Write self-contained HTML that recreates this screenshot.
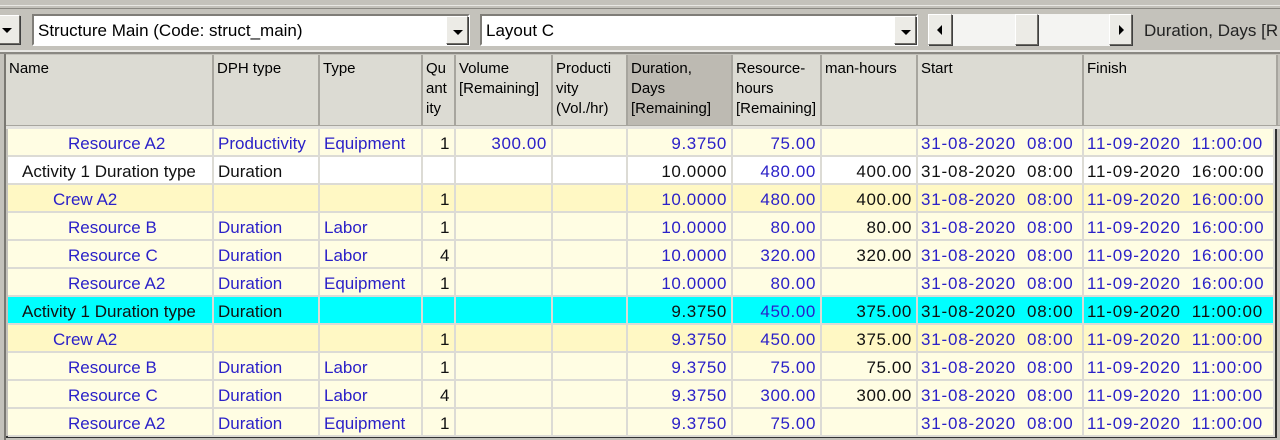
<!DOCTYPE html>
<html><head><style>
*{margin:0;padding:0;box-sizing:border-box}
body{width:1280px;height:440px;background:#c4c2bb;position:relative;overflow:hidden;font-family:"Liberation Sans",Arial,sans-serif}
.a{position:absolute}
.btn{position:absolute;background:#ecebe6;border:1px solid;border-color:#fff #6d6b66 #6d6b66 #fff;box-shadow:1px 1px 0 #404040}
.combo{position:absolute;background:#fff;border:2px solid;border-color:#7f7d78 #fff #fff #7f7d78;font-size:17px;line-height:30px;padding-left:4px;color:#000}
.hd{position:absolute;top:55px;height:70px;background:#dcdbd3;border-right:2px solid #a7a59e;font-size:15px;line-height:20px;padding:4px 0 0 3px;color:#000}
.c{position:absolute;top:0;height:28px;border-right:2px solid #dcdbd5;border-bottom:2px solid #dcdbd5;font-size:17px;line-height:29px;white-space:nowrap;overflow:hidden}
.r{text-align:right;padding-right:4px;letter-spacing:0.6px}
.d{letter-spacing:0.8px}
.b{color:#2b21c8}
.k{color:#111}
</style></head><body>
<div class="a" style="left:0;top:0;width:1280px;height:6px;background:#c4c2bb;border-bottom:1px solid #e8e7e3"></div>
<div class="a" style="left:0;top:8px;width:1280px;height:1px;background:#8a8882"></div>
<div class="btn" style="left:-4px;top:15px;width:24px;height:29px"></div>
<div class="a" style="left:2px;top:28px;border-left:5px solid transparent;border-right:5px solid transparent;border-top:5px solid #000"></div>
<div class="combo" style="left:32px;top:14px;width:438px;height:32px">Structure Main (Code: struct_main)</div>
<div class="btn" style="left:446px;top:16px;width:22px;height:28px"></div>
<div class="a" style="left:453px;top:30px;border-left:5px solid transparent;border-right:5px solid transparent;border-top:5px solid #000"></div>
<div class="combo" style="left:480px;top:14px;width:438px;height:32px">Layout C</div>
<div class="btn" style="left:894px;top:16px;width:22px;height:28px"></div>
<div class="a" style="left:901px;top:30px;border-left:5px solid transparent;border-right:5px solid transparent;border-top:5px solid #000"></div>
<div class="a" style="left:928px;top:14px;width:204px;height:32px;background:#f4f4f2"></div>
<div class="btn" style="left:928px;top:14px;width:24px;height:31px"></div>
<div class="a" style="left:937px;top:25px;border-top:5px solid transparent;border-bottom:5px solid transparent;border-right:5px solid #000"></div>
<div class="btn" style="left:1015px;top:14px;width:23px;height:31px"></div>
<div class="btn" style="left:1109px;top:14px;width:23px;height:31px"></div>
<div class="a" style="left:1119px;top:25px;border-top:5px solid transparent;border-bottom:5px solid transparent;border-left:5px solid #000"></div>
<div class="a" style="left:1144px;top:20px;font-size:17px;line-height:22px;color:#222;white-space:nowrap">Duration, Days [R</div>
<div class="a" style="left:0;top:50px;width:1280px;height:2px;background:#e8e7e3"></div>
<div class="a" style="left:0;top:52px;width:1280px;height:2px;background:#8a8882"></div>
<div class="a" style="left:4px;top:54px;width:2px;height:386px;background:#7a7872"></div>
<div class="hd" style="left:6px;width:208px">Name</div>
<div class="hd" style="left:214px;width:106px">DPH type</div>
<div class="hd" style="left:320px;width:103px">Type</div>
<div class="hd" style="left:423px;width:33px">Qu<br>ant<br>ity</div>
<div class="hd" style="left:456px;width:97px">Volume<br>[Remaining]</div>
<div class="hd" style="left:553px;width:75px">Producti<br>vity<br>(Vol./hr)</div>
<div class="hd" style="left:628px;width:105px;background:#bdbab2">Duration,<br>Days<br>[Remaining]</div>
<div class="hd" style="left:733px;width:89px">Resource-<br>hours<br>[Remaining]</div>
<div class="hd" style="left:822px;width:96px">man-hours</div>
<div class="hd" style="left:918px;width:166px">Start</div>
<div class="hd" style="left:1084px;width:194px">Finish</div>
<div class="a" style="left:6px;top:125px;width:1274px;height:4px;background:#e4e3de;border-top:1px solid #a7a59e"></div>
<div class="a" style="left:1275px;top:129px;width:2px;height:311px;background:#333"></div>
<div class="a" style="left:6px;top:436px;width:1270px;height:2px;background:#333"></div>
<div class="a" style="left:6px;top:438px;width:1274px;height:2px;background:#c4c2bb"></div>
<div id="rows"></div>
<script>
const cols=[[8,214],[214,320],[320,423],[423,456],[456,553],[553,628],[628,733],[733,822],[822,918],[918,1084],[1084,1275]];
const Y='#fffde3',C='#fff8c4',W='#ffffff',Q='#00ffff';
const rows=[
[Y,['Resource A2','b',68],['Productivity','b'],['Equipment','b'],['1','k'],['300.00','b'],'',['9.3750','b'],['75.00','b'],'',['31-08-2020  08:00','b'],['11-09-2020  11:00:00','b']],
[W,['Activity 1 Duration type','k',22],['Duration','k'],'','','','',['10.0000','k'],['480.00','b'],['400.00','k'],['31-08-2020  08:00','k'],['11-09-2020  16:00:00','k']],
[C,['Crew A2','b',53],'','',['1','k'],'','',['10.0000','b'],['480.00','b'],['400.00','k'],['31-08-2020  08:00','b'],['11-09-2020  16:00:00','b']],
[Y,['Resource B','b',68],['Duration','b'],['Labor','b'],['1','k'],'','',['10.0000','b'],['80.00','b'],['80.00','k'],['31-08-2020  08:00','b'],['11-09-2020  16:00:00','b']],
[Y,['Resource C','b',68],['Duration','b'],['Labor','b'],['4','k'],'','',['10.0000','b'],['320.00','b'],['320.00','k'],['31-08-2020  08:00','b'],['11-09-2020  16:00:00','b']],
[Y,['Resource A2','b',68],['Duration','b'],['Equipment','b'],['1','k'],'','',['10.0000','b'],['80.00','b'],'',['31-08-2020  08:00','b'],['11-09-2020  16:00:00','b']],
[Q,['Activity 1 Duration type','k',22],['Duration','k'],'','','','',['9.3750','k'],['450.00','b'],['375.00','k'],['31-08-2020  08:00','k'],['11-09-2020  11:00:00','k']],
[C,['Crew A2','b',53],'','',['1','k'],'','',['9.3750','b'],['450.00','b'],['375.00','k'],['31-08-2020  08:00','b'],['11-09-2020  11:00:00','b']],
[Y,['Resource B','b',68],['Duration','b'],['Labor','b'],['1','k'],'','',['9.3750','b'],['75.00','b'],['75.00','k'],['31-08-2020  08:00','b'],['11-09-2020  11:00:00','b']],
[Y,['Resource C','b',68],['Duration','b'],['Labor','b'],['4','k'],'','',['9.3750','b'],['300.00','b'],['300.00','k'],['31-08-2020  08:00','b'],['11-09-2020  11:00:00','b']],
[Y,['Resource A2','b',68],['Duration','b'],['Equipment','b'],['1','k'],'','',['9.3750','b'],['75.00','b'],'',['31-08-2020  08:00','b'],['11-09-2020  11:00:00','b']]
];
const right=[false,false,false,true,true,true,true,true,true,false,false];
let h='';
rows.forEach((r,i)=>{
 const top=129+i*28;
 for(let j=0;j<11;j++){
  const [x0,x1]=cols[j];let v=r[j+1];
  let bg=r[0];
  let txt='',cls='',pad='';
  if(v){txt=v[0].replace(/  /g,'&nbsp;&nbsp;');cls=v[1];}
  if(right[j])cls+=' r';
  else pad='padding-left:'+((v&&v[2])?v[2]-x0:(j>=9?3:4))+'px;';
  if(j>=9)cls+=' d';
  h+=`<div class="c ${cls}" style="left:${x0}px;top:${top}px;width:${x1-x0}px;background:${bg};${pad}">${txt}</div>`;
 }
});
document.getElementById('rows').innerHTML=h;
</script>
</body></html>
